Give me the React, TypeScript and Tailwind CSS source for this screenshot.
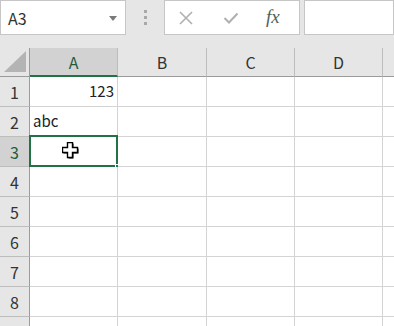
import React from 'react';

const cols = ['A', 'B', 'C', 'D'];
const colWidths = ['w-[88px]', 'w-[89px]', 'w-[88px]', 'w-[88px]'];
const rows = [1, 2, 3, 4, 5, 6, 7, 8, 9];

const CrossCursor: React.FC = () => (
  <svg width="17" height="17" viewBox="0 0 17 17" className="absolute left-[32px] top-[5px]">
    <path d="M5.5 0.5h5v5h5v5h-5v5h-5v-5h-5v-5h5z" fill="#000" transform="translate(1 1)" />
    <path d="M5.5 0.5h5v5h5v5h-5v5h-5v-5h-5v-5h5z" fill="#fff" stroke="#000" strokeWidth="1.4" />
  </svg>
);

const App: React.FC = () => {
  return (
    <div className="w-[394px] h-[326px] overflow-hidden bg-[#e6e6e6] font-['Noto_Sans_CJK_JP','Liberation_Sans',sans-serif] text-[15px] text-[#222]">
      {/* Formula bar */}
      <div className="flex h-[48px] items-start">
        <div className="relative flex h-[35px] w-[126px] items-center border border-[#c6c6c6] bg-white pl-[7px] text-[16px] text-[#333]">
          A3
          <svg width="8" height="5" viewBox="0 0 8 5" className="absolute right-[8px] top-[15px]">
            <path d="M0 0h8L4 5z" fill="#7a7a7a" />
          </svg>
        </div>
        <div className="flex h-[35px] w-[38px] flex-col items-center justify-center gap-[3px]">
          <div className="h-[3px] w-[3px] bg-[#a8a8a8]" />
          <div className="h-[3px] w-[3px] bg-[#a8a8a8]" />
          <div className="h-[3px] w-[3px] bg-[#a8a8a8]" />
        </div>
        <div className="flex h-[35px] w-[136px] items-center border border-[#c6c6c6] bg-white">
          <svg width="14" height="14" viewBox="0 0 14 14" className="ml-[14px]">
            <path d="M1 1L13 13M13 1L1 13" stroke="#b0b0b0" strokeWidth="1.6" />
          </svg>
          <svg width="16" height="12" viewBox="0 0 16 12" className="ml-[30px]">
            <path d="M1.5 6L6 10.5L14.5 1.5" stroke="#b0b0b0" strokeWidth="2" fill="none" />
          </svg>
          <span className="ml-[27px] font-['Liberation_Serif',serif] text-[19px] italic text-[#4f625f]">fx</span>
        </div>
        <div className="ml-[4px] h-[35px] flex-1 border border-[#c6c6c6] bg-white" />
      </div>

      {/* Column headers */}
      <div className="flex h-[29px]">
        <div className="relative h-full w-[30px] border-r border-b border-[#9b9b9b]">
          <svg width="23" height="22" viewBox="0 0 23 22" className="absolute left-[4px] top-[3px]">
            <path d="M22 0V21H0z" fill="#b4b4b4" />
          </svg>
        </div>
        {cols.map((c, i) => (
          <div
            key={c}
            className={`${colWidths[i]} flex h-full items-center justify-center border-r text-[16px] ${
              c === 'A'
                ? 'border-b-2 border-r-[#bdbdbd] border-b-[#217346] bg-[#d2d2d2] text-[#1e5c3c]'
                : 'border-b border-r-[#bdbdbd] border-b-[#9b9b9b] text-[#333]'
            }`}
          >
            {c}
          </div>
        ))}
        <div className="h-full flex-1 border-b border-[#9b9b9b]" />
      </div>

      {/* Rows */}
      {rows.map((r) => (
        <div key={r} className="flex h-[30px]">
          <div
            className={`flex h-full w-[30px] items-center justify-center border-r border-b text-[16px] ${
              r === 3
                ? 'border-r-[#9b9b9b] border-b-[#bdbdbd] bg-[#d2d2d2] text-[#1e5c3c]'
                : 'border-r-[#9b9b9b] border-b-[#bdbdbd] text-[#333]'
            }`}
          >
            {r < 9 ? r : null}
          </div>
          {cols.map((c, i) => (
            <div
              key={c}
              className={`${colWidths[i]} relative flex h-full items-center border-r border-b border-[#d4d4d4] bg-white`}
            >
              {c === 'A' && r === 1 && <span className="w-full pr-[3px] text-right">123</span>}
              {c === 'A' && r === 2 && <span className="pl-[3px]">abc</span>}
              {c === 'A' && r === 3 && (
                <>
                  <div className="absolute -left-px -top-[2px] h-[32px] w-[89px] border-2 border-[#217346]" />
                  <div className="absolute -bottom-[4px] -right-[4px] h-[6px] w-[6px] border border-white bg-[#217346]" />
                  <CrossCursor />
                </>
              )}
            </div>
          ))}
          <div className="h-full flex-1 border-b border-[#d4d4d4] bg-white" />
        </div>
      ))}
    </div>
  );
};

export default App;
